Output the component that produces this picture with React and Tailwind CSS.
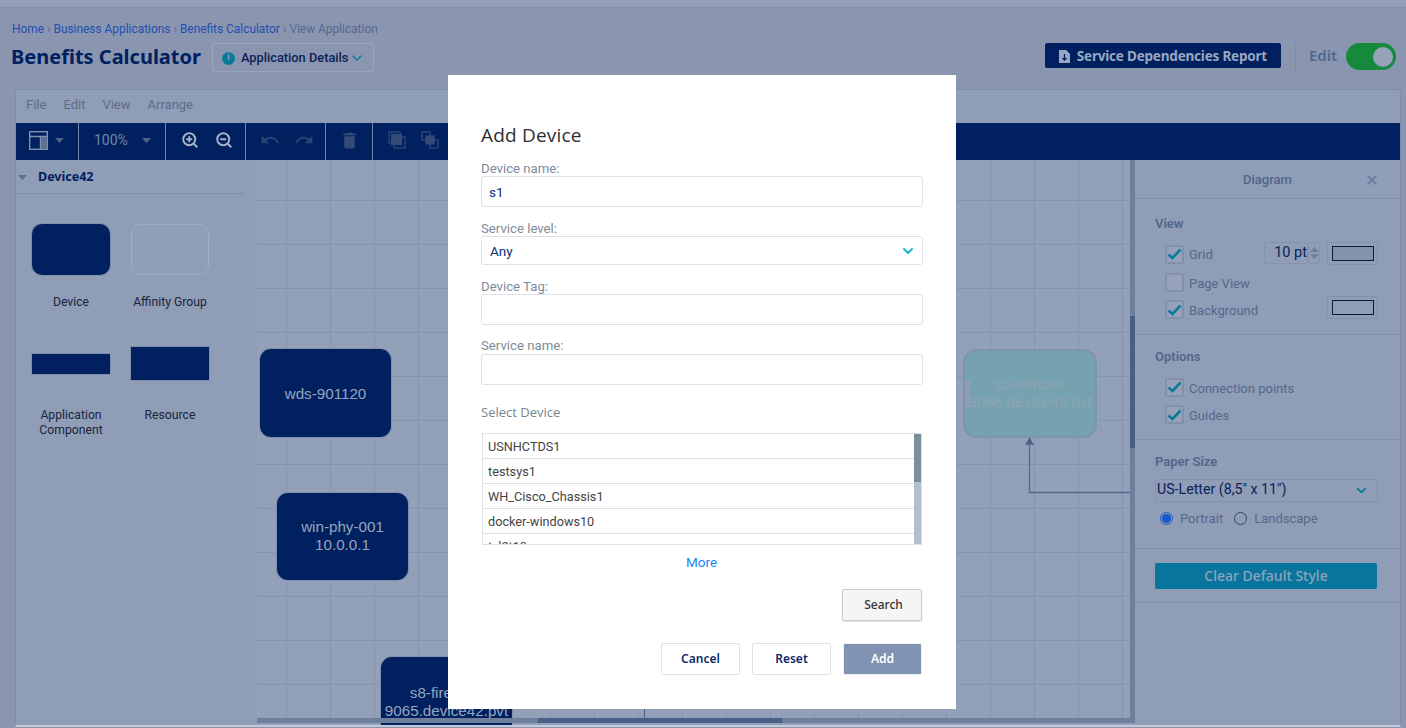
import React from "react";
import { ZoomIn, ZoomOut, ChevronDown, X } from "lucide-react";
import { MdUndo, MdRedo, MdDelete } from "react-icons/md";

const ui = "font-['Open_Sans','Noto_Sans',sans-serif]";
const sans = "font-['Roboto','Liberation_Sans',sans-serif]";
const head = "font-['Noto_Sans','Open_Sans',sans-serif]";

function Caret({ className, w = 9, h = 5 }) {
  return (
    <svg width={w} height={h} viewBox="0 0 12 7" preserveAspectRatio="none" className={className}>
      <path d="M0 0h12L6 7z" fill="currentColor" />
    </svg>
  );
}

function Sep() {
  return <div className="h-full w-px bg-[#7386a8]" />;
}

function Toolbar() {
  return (
    <div className="flex h-[37px] items-center bg-[#002060] text-[#6e7f9f]">
      <div className="flex h-full w-[62px] shrink-0 items-center gap-[7px] pb-[3px] pl-[13px]">
        <svg width="19" height="19" viewBox="0 0 19 19" fill="none" stroke="#7f90ad" strokeWidth="1.4">
          <rect x="0.7" y="0.7" width="17.6" height="17.6" />
          <path d="M0.7 5.5h17.6M11.5 5.5v12.8" />
          <rect x="12" y="6" width="6" height="12" fill="#5c6f93" stroke="none" />
        </svg>
        <Caret className="text-[#4f6388]" />
      </div>
      <Sep />
      <div className="flex h-full w-[86px] shrink-0 items-center justify-between pb-[3px] pl-[15px] pr-[14px]">
        <span className={`text-[14px] ${sans} text-[#7486a6]`}>100%</span>
        <Caret className="text-[#4f6388]" />
      </div>
      <Sep />
      <div className="flex h-full w-[79px] shrink-0 items-center gap-[16px] pb-[3px] pl-[15px] text-[#a5b2c8]">
        <ZoomIn size={18} strokeWidth={2.6} />
        <ZoomOut size={18} strokeWidth={2.6} />
      </div>
      <Sep />
      <div className="flex h-full w-[79px] shrink-0 items-center gap-[14px] pb-[3px] pl-[14px] text-[#2c4474]">
        <MdUndo size={20} />
        <MdRedo size={20} />
      </div>
      <Sep />
      <div className="flex h-full w-[46px] shrink-0 items-center justify-center pb-[3px] text-[#344b78]">
        <MdDelete size={21} />
      </div>
      <Sep />
      <div className="flex h-full items-center gap-[15px] pb-[3px] pl-[15px] text-[#344b78]">
        <svg width="18" height="18" viewBox="0 0 18 18" fill="none" stroke="currentColor" strokeWidth="1.2">
          <rect x="1" y="1" width="11" height="11" />
          <rect x="6" y="6" width="11" height="11" />
          <rect x="3.5" y="3.5" width="10" height="10" fill="currentColor" />
        </svg>
        <svg width="18" height="18" viewBox="0 0 18 18" fill="none" stroke="currentColor" strokeWidth="1.2">
          <rect x="1" y="1" width="8" height="8" />
          <rect x="9" y="9" width="8" height="8" />
          <rect x="5" y="5" width="8" height="8" fill="currentColor" />
        </svg>
      </div>
    </div>
  );
}

function Sidebar() {
  const Shape = ({ label, children, h, mt }) => (
    <div className="flex w-[78px] flex-col items-center">
      <div className={`flex w-[78px] items-center justify-center ${h}`}>{children}</div>
      <div className={`whitespace-nowrap text-center text-[12.2px] leading-[15px] text-[#1a2540] ${sans} ${mt}`}>{label}</div>
    </div>
  );
  return (
    <div className="w-[241px] shrink-0 bg-[#8f9db6]">
      <div className="mr-[13px] flex h-[34px] items-center border-b border-[#7f8eaa] pl-[2px] pt-[1px]">
        <Caret className="mr-[11px] text-[#5f6f8e]" />
        <span className={`text-[12.5px] font-bold text-[#002060] ${head}`}>Device42</span>
      </div>
      <div className="grid grid-cols-[78px_78px] gap-x-[21px] gap-y-[37px] pl-[16px] pt-[30px]">
        <Shape label="Device" h="h-[51px]" mt="mt-[20px]">
          <div className="h-full w-full rounded-[10px] bg-[#002060] shadow-[0_0_0_1px_#7f8eaa]" />
        </Shape>
        <Shape label="Affinity Group" h="h-[51px]" mt="mt-[20px]">
          <div className="h-full w-full rounded-[10px] border border-[#a0acc2] bg-[#8f9db6]" />
        </Shape>
        <Shape label={<>Application<br />Component</>} h="h-[33px]" mt="mt-[28px]">
          <div className="h-[20px] w-full bg-[#002060] shadow-[0_0_0_1px_#7f8eaa]" />
        </Shape>
        <Shape label="Resource" h="h-[33px]" mt="mt-[28px]">
          <div className="h-[33px] w-full bg-[#002060] shadow-[0_0_0_1px_#7f8eaa]" />
        </Shape>
      </div>
    </div>
  );
}

function Node({ cls, children }) {
  return (
    <div className={`absolute flex items-start justify-center rounded-[11px] bg-[#002060] text-center text-[15.2px] leading-[17.7px] text-[#96a5bf] shadow-[0_0_0_1px_#7f8eaa] font-['Liberation_Sans',sans-serif] ${cls}`}>
      {children}
    </div>
  );
}

function Canvas() {
  return (
    <div className="relative min-w-0 flex-1 overflow-hidden bg-[#93a0b9] [background-image:linear-gradient(to_right,#8794af_1px,transparent_1px),linear-gradient(to_bottom,#8794af_1px,transparent_1px),linear-gradient(to_right,#909db7_1px,transparent_1px),linear-gradient(to_bottom,#909db7_1px,transparent_1px)] [background-size:44px_44px,44px_44px,11px_11px,11px_11px] [background-position:29px_40px,29px_40px,7px_7px,7px_7px]">
      <Node cls="left-[3px] top-[189px] h-[88px] w-[131px] pt-[36px]">wds-901120</Node>
      <Node cls="left-[20px] top-[333px] h-[87px] w-[131px] pt-[25px]"><span>win-phy-001<br />10.0.0.1</span></Node>
      <Node cls="left-[124px] top-[497px] h-[90px] w-[131px] pt-[27px]"><span className="whitespace-nowrap">s8-firewall-<br />9065.device42.pvt</span></Node>
      <div className="absolute left-[706px] top-[189px] h-[89px] w-[134px] overflow-hidden rounded-[14px] border-2 border-[#7f93ab] bg-[#76a1ae] pt-[24px] text-center font-['Liberation_Sans',sans-serif] text-[15.2px] leading-[17.7px] text-[#8ea4b6]">
        <div className="absolute left-[-2px] top-[29px] h-[28px] w-[7px] bg-[#8f9db6]" />
        <span className="relative whitespace-nowrap">s3-tomcat-<br />9066.device42.pvt</span>
      </div>
      <svg className="absolute left-[760px] top-[276px]" width="120" height="62" viewBox="0 0 120 62" fill="none">
        <path d="M12.5 8V56.5H120" stroke="#566b8e" strokeWidth="1.4" />
        <path d="M12.5 1L17 9.5 12.5 8 8 9.5z" fill="#4a5f85" />
      </svg>
      <div className="absolute left-[387px] top-[540px] h-[20px] w-px bg-[#4a5f85]" />
      <div className="absolute bottom-[2px] left-0 right-0 h-[5px] bg-[#6e7f9c]">
        <div className="absolute left-[281px] top-0 h-full w-[244px] bg-[#4a5f85]" />
      </div>
      <div className="absolute bottom-[2px] right-0 top-0 w-[5px] bg-[#6e7f9c]">
        <div className="absolute left-0 top-[156px] h-[132px] w-full bg-[#4a5f85]" />
      </div>
    </div>
  );
}

function Cb({ checked, label }) {
  return (
    <div className="flex items-center gap-[5px]">
      <div className="flex h-[19px] w-[19px] items-center justify-center rounded-[2px] border-2 border-[#8290ab] bg-[#95a2ba]">
        {checked && (
          <svg width="15" height="12" viewBox="0 0 15 12" fill="none">
            <path d="M1.5 6.5L5.5 10 13.5 1.5" stroke="#0a7a99" strokeWidth="2.6" />
          </svg>
        )}
      </div>
      <span className={`mt-[2px] text-[13px] text-[#55688c] ${sans}`}>{label}</span>
    </div>
  );
}

function Swatch({ fill }) {
  return (
    <div className="flex h-[23px] w-[51px] items-center justify-center rounded-[3px] border border-[#8492ad]">
      <div className={`h-[15px] w-[42px] border border-[#0a1a3a] ${fill}`} />
    </div>
  );
}

function RightPanel() {
  const title = `text-[13px] font-semibold text-[#52658a] ${sans}`;
  return (
    <div className="w-[265px] shrink-0 bg-[#8f9db6]">
      <div className="relative flex h-[39px] items-center justify-center border-b border-[#7f8eaa] pt-[1px]">
        <span className={`text-[13px] font-medium text-[#52658a] ${sans}`}>Diagram</span>
        <X size={14} strokeWidth={3.6} className="absolute right-[21px] text-[#6d7f9f]" />
      </div>
      <div className="h-[136px] border-b border-[#7f8eaa] pl-[20px] pt-[15px]">
        <div className={title}>View</div>
        <div className="mt-[9px] flex items-center justify-between pl-[10px] pr-[22px]">
          <Cb checked label="Grid" />
          <div className="flex -translate-y-[1px] items-center gap-[7px]">
            <div className="flex items-center">
              <div className={`flex h-[22px] w-[44px] items-center justify-end rounded-[3px] border border-[#8492ad] text-[14.5px] text-[#0b2256] ${sans}`}>10 pt</div>
              <div className="flex h-[22px] w-[12px] flex-col items-center justify-center gap-[2px] rounded-[3px] border border-[#8492ad] text-[#6d7f9f]">
                <Caret className="rotate-180" />
                <Caret />
              </div>
            </div>
            <Swatch fill="bg-[#8592ad]" />
          </div>
        </div>
        <div className="mt-[6px] pl-[10px]"><Cb label="Page View" /></div>
        <div className="mt-[5px] flex items-center justify-between pl-[10px] pr-[22px]">
          <Cb checked label="Background" />
          <div className="-translate-y-[2px]"><Swatch fill="bg-[#8f9db6]" /></div>
        </div>
      </div>
      <div className="h-[105px] border-b border-[#7f8eaa] pl-[20px] pt-[12px]">
        <div className={title}>Options</div>
        <div className="mt-[10px] pl-[10px]"><Cb checked label="Connection points" /></div>
        <div className="mt-[6px] pl-[10px]"><Cb checked label="Guides" /></div>
      </div>
      <div className="h-[109px] border-b border-[#7f8eaa] pl-[19px] pt-[12px]">
        <div className={`pl-px ${title}`}>Paper Size</div>
        <div className={`ml-px mt-[7px] flex h-[23px] w-[223px] items-center justify-between rounded-[3px] border border-[#8492ad] pl-[1px] pr-[8px] text-[14.2px] text-[#0b2256] ${sans}`}>
          <span>US-Letter (8,5" x 11")</span>
          <ChevronDown size={15} strokeWidth={3} className="text-[#0a7a99]" />
        </div>
        <div className={`ml-px mt-[7px] flex items-center pl-[5px] text-[13px] text-[#55688c] ${sans}`}>
          <div className="flex h-[13px] w-[13px] items-center justify-center rounded-full border border-[#1757c9]">
            <div className="h-[9px] w-[9px] rounded-full bg-[#1757c9]" />
          </div>
          <span className="ml-[7px]">Portrait</span>
          <div className="ml-[11px] h-[13px] w-[13px] rounded-full border border-[#33466b]" />
          <span className="ml-[7px]">Landscape</span>
        </div>
      </div>
      <div className="h-[54px] border-b border-[#7f8eaa] pl-[20px] pt-[14px]">
        <div className={`flex h-[26px] w-[222px] items-center justify-center rounded-[2px] bg-[#0a759c] pb-[2px] text-[14px] font-medium text-[#8fa3bc] ${head}`}>
          Clear Default Style
        </div>
      </div>
    </div>
  );
}

function Field({ label, children, mt, lower }) {
  return (
    <div className={mt}>
      <div className={`text-[13.2px] leading-[16px] text-[#7e8b99] ${sans} ${lower ? "translate-y-[1px]" : ""}`}>{label}</div>
      {children}
    </div>
  );
}

function Input({ value, h = "h-[31px]" }) {
  return (
    <div className={`flex w-[442px] items-center rounded-[3px] border border-[#dde1e6] pl-[7px] pt-[1px] text-[13.5px] text-[#0b2a78] ${sans} ${h}`}>
      {value}
    </div>
  );
}

function Modal() {
  const rows = ["USNHCTDS1", "testsys1", "WH_Cisco_Chassis1", "docker-windows10", "tvl2t10"];
  return (
    <div className="absolute left-[448px] top-[75px] h-[634px] w-[508px] bg-white pl-[33px] pt-[48px]">
      <h2 className={`text-[19px] leading-[24px] tracking-[0.2px] text-[#2b2f33] ${ui}`}>Add Device</h2>
      <Field label="Device name:" mt="mt-[13px]" lower>
        <Input value="s1" />
      </Field>
      <Field label="Service level:" mt="mt-[13px]" lower>
        <div className={`relative flex h-[29px] w-[442px] items-center rounded-[3px] border border-[#dde1e6] pl-[8px] pt-[1px] text-[13.5px] text-[#0b2a78] ${sans}`}>
          Any
          <ChevronDown size={16} strokeWidth={3} className="absolute right-[6px] text-[#1cb8c9]" />
        </div>
      </Field>
      <Field label="Device Tag:" mt="mt-[13px]" lower>
        <Input />
      </Field>
      <Field label="Service name:" mt="mt-[13px]">
        <Input />
      </Field>
      <div className={`mt-[19px] text-[13px] leading-[16px] text-[#75848f] ${ui}`}>Select Device</div>
      <div className="relative ml-px mt-[13px] h-[112px] w-[440px] overflow-hidden border border-[#dde1e6]">
        {rows.map((r) => (
          <div key={r} className={`flex h-[25px] items-center border-b border-[#dde1e6] pl-[5px] pt-[1px] text-[12.7px] text-[#444] ${sans}`}>{r}</div>
        ))}
        <div className="absolute right-0 top-0 h-full w-[7px] bg-[#b4bfcc]">
          <div className="h-[48px] w-full bg-[#7c8f99]" />
        </div>
      </div>
      <div className={`mt-[9px] w-[441px] text-center text-[13.5px] leading-[16px] text-[#1a85ff] ${sans}`}>More</div>
      <div className="mt-[19px] flex w-[441px] justify-end">
        <div className={`flex h-[32px] w-[80px] items-center justify-center rounded-[2px] border border-[#c9cdd2] bg-[#f5f5f5] pl-[3px] text-[12px] font-medium text-[#333] shadow-[0_1px_1px_#ddd] ${head}`}>Search</div>
      </div>
      <div className="mt-[22px] flex w-[441px] justify-end gap-[12px]">
        <div className={`flex h-[32px] w-[79px] items-center justify-center rounded-[2px] border border-[#dde1e6] text-[12px] font-semibold text-[#0b2a6b] ${head}`}>Cancel</div>
        <div className={`flex h-[32px] w-[79px] items-center justify-center rounded-[2px] border border-[#dde1e6] text-[12px] font-semibold text-[#0b2a6b] ${head}`}>Reset</div>
        <div className={`flex h-[32px] w-[79px] items-center justify-center rounded-[2px] border border-[#eef0f4] bg-[#8093b3] pb-[1px] text-[12px] font-semibold text-white ${head}`}>Add</div>
      </div>
    </div>
  );
}

export default function App() {
  return (
    <div className={`relative h-[728px] w-[1406px] overflow-hidden bg-[#8a96b0] ${sans}`}>
      <div className="h-[8px] border-b border-[#7f8cab] bg-[#939fb8]" />
      <div className="flex h-[81px] flex-col pl-[12px] pr-[10px]">
        <div className="mt-[14px] text-[11.9px] leading-[14px] text-[#55688c]">
          <span className="text-[#1f4fb0]">Home</span> › <span className="text-[#1f4fb0]">Business Applications</span> › <span className="text-[#1f4fb0]">Benefits Calculator</span> › View Application
        </div>
        <div className="mt-[7px] flex items-start">
          <h1 className={`-ml-px text-[20px] font-bold leading-[28px] text-[#002060] ${head}`}>Benefits Calculator</h1>
          <div className="ml-[11px] flex h-[29px] w-[162px] items-center gap-[6px] rounded-[2px] border border-[#99a5bd] pl-[9px] pt-[1px] text-[12.8px] font-medium text-[#0b2256]">
            <span className="flex h-[13px] w-[13px] items-center justify-center rounded-full bg-[#0a7a99] text-[9px] font-bold text-[#8fa3bc]">i</span>
            Application Details
            <ChevronDown size={16} className="-ml-[5px] text-[#0a7a99]" />
          </div>
          <div className="ml-auto flex items-start">
            <div className={`flex h-[25px] w-[236px] items-center justify-center gap-[7px] rounded-[2px] bg-[#002060] pt-[1px] text-[13.5px] font-bold text-[#98a8c2] ${head}`}>
              <svg width="11" height="13" viewBox="0 0 11 13" fill="#98a8c2">
                <path d="M0 0h7l4 4v9H0z" />
                <path d="M5.5 4v6M3.5 8l2 2.2L7.5 8" stroke="#002060" strokeWidth="1.2" fill="none" />
              </svg>
              <span className="tracking-[-0.2px]">Service Dependencies Report</span>
            </div>
            <div className="ml-[14px] h-[29px] w-px bg-[#7f8cab]" />
            <span className={`ml-[13px] mt-[1px] text-[15px] font-semibold leading-[22px] text-[#52678c] ${head}`}>Edit</span>
            <div className="ml-[9px] flex h-[27px] w-[50px] items-center justify-end rounded-full bg-[#15893c] pr-[3px]">
              <div className="h-[20px] w-[20px] rounded-full bg-[#95a2ba]" />
            </div>
          </div>
        </div>
      </div>
      <div className="ml-[15px] mr-[5px] flex h-[638px] flex-col overflow-hidden rounded-t-[3px] border-x border-t border-b-2 border-[#7f8cab] border-b-[#c5cbd8] bg-[#8f9db6]">
        <div className="flex h-[33px] items-center gap-[17px] pb-[4px] pl-[10px] text-[13px] text-[#5c6c8c]">
          <span>File</span><span>Edit</span><span>View</span><span>Arrange</span>
        </div>
        <Toolbar />
        <div className="flex min-h-0 flex-1">
          <Sidebar />
          <Canvas />
          <RightPanel />
        </div>
      </div>
      <Modal />
    </div>
  );
}
